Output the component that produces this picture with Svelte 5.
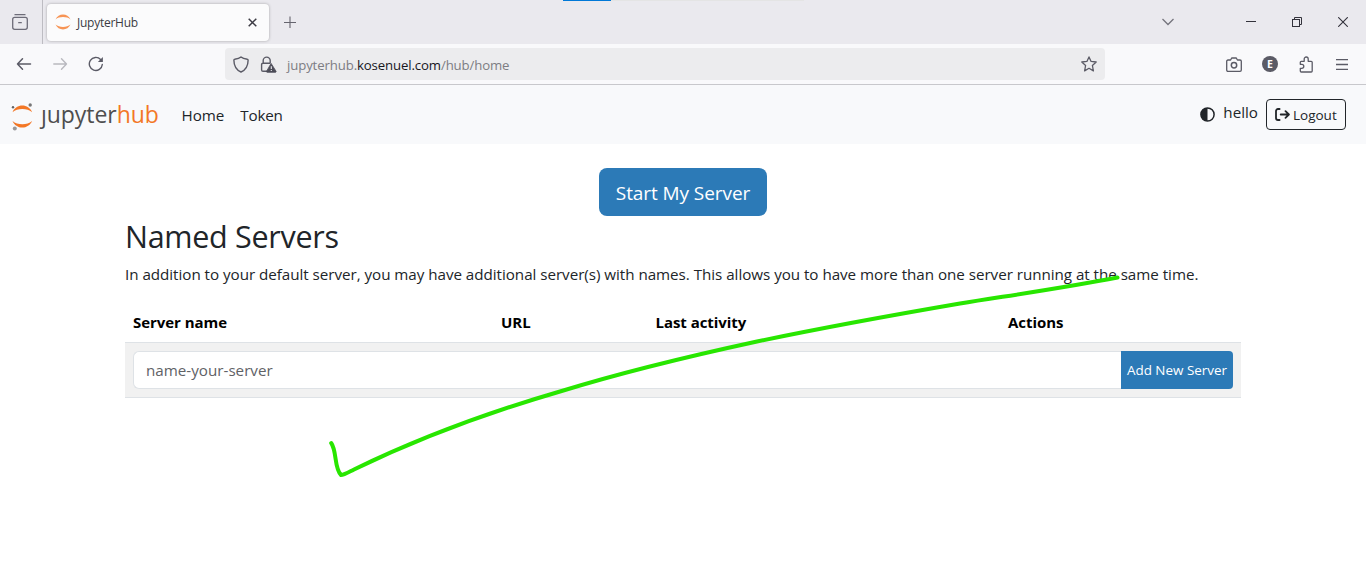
<script>
  const columns = ['Server name', 'URL', 'Last activity', 'Actions'];
</script>

<div class="window">
  <div class="tabs">
    <div class="recent">
      <svg width="18" height="18" viewBox="0 0 18 18" fill="none" stroke="#6d6c78" stroke-width="1.3" stroke-linecap="round">
        <path d="M4 1.7h10" /><rect x="1.7" y="4.4" width="14.6" height="11.9" rx="2" /><path d="M7.7 9.7h2.6" />
      </svg>
    </div>
    <div class="tab">
      <svg width="16" height="16" viewBox="0 0 16 16" fill="#f79455">
        <path d="M.5 5.4C2 2.2 4.8.5 8 .5s6 1.7 7.5 4.9C13.600 3.900 11 3.100 8 3.100S2.400 3.900.5 5.400z" />
        <path d="M.5 10.600C2 13.800 4.800 15.500 8 15.500s6-1.700 7.500-4.900C13.600 12.100 11 12.900 8 12.900s-5.600-.8-7.500-2.300z" />
      </svg>
      <span class="tab-title">JupyterHub</span>
      <svg class="tab-close" width="9" height="9" viewBox="0 0 9 9" stroke="#3c3b44" stroke-width="1.5"><path d="M.7.7l7.600 7.600M8.300.7L.7 8.300" /></svg>
    </div>
    <svg class="plus" width="12" height="12" viewBox="0 0 12 12" stroke="#65646e" stroke-width="1.1"><path d="M0 6.500h12M6 .5v12" /></svg>
    <div class="load"><i></i></div>
    <div class="controls">
      <svg width="12" height="8" viewBox="0 0 12 8" fill="none" stroke="#75747d" stroke-width="1.3"><path d="M.5 1l5.500 5.500L11.500 1" /></svg>
      <svg class="min" width="10" height="10" viewBox="0 0 10 10" stroke="#33323b"><path d="M0 4.500h10" /></svg>
      <svg class="max" width="10" height="10" viewBox="0 0 10 10" fill="none" stroke="#33323b"><rect x=".5" y="2.500" width="7" height="7" /><path d="M2.500 2.500v-2h7v7h-2" /></svg>
      <svg width="10" height="10" viewBox="0 0 10 10" stroke="#33323b" stroke-width="1.1"><path d="M.2.2l9.600 9.600M9.800.2L.2 9.800" /></svg>
    </div>
  </div>

  <div class="toolbar">
    <svg class="back" width="16" height="14" viewBox="0 0 16 14" fill="none" stroke="#5b5b66" stroke-width="1.500" stroke-linecap="round" stroke-linejoin="round"><path d="M6.500 1.800L1.500 7l5 5.200M1.500 7h13" /></svg>
    <svg class="forward" width="16" height="14" viewBox="0 0 16 14" fill="none" stroke="#b9b9bf" stroke-width="1.400" stroke-linecap="round" stroke-linejoin="round"><path d="M8.500 1.800l5 5.200-5 5.200M13.500 7H.8" /></svg>
    <svg class="reload" width="16" height="16" viewBox="0 0 16 16" fill="none" stroke="#5b5b66" stroke-width="1.400" stroke-linecap="round"><path d="M14.300 8.500A6.500 6.500 0 1 1 12.600 3.500" /><path d="M14.900 1v5h-5z" fill="#5b5b66" stroke="none" /></svg>
    <div class="address">
      <svg width="16" height="17" viewBox="0 0 16 17" fill="none" stroke="#5b5b66" stroke-width="1.400" stroke-linejoin="round"><path d="M8 1C6.600 2.300 4.200 3 1.700 3.300c-.6 0-.8.4-.8.9C.9 10 3.600 14 8 16c4.400-2 7.100-6 7.100-11.800 0-.5-.2-.9-.8-.9C11.800 3 9.400 2.300 8 1z" /></svg>
      <svg class="lock" width="17" height="17" viewBox="0 0 17 17" fill="none" stroke="#5b5b66" stroke-width="1.400"><path d="M7 15.300H3A1.400 1.400 0 0 1 1.600 14V8.600A1.400 1.400 0 0 1 3 7.200h7.400M3.200 7V4.600a3.500 3.500 0 0 1 7 0V7" /><path d="M11.100 7.400L6.600 15.200c-.3.600 0 1.100.6 1.100h8.200c.600 0 .9-.5.6-1.100z" fill="#4d4d58" stroke="#4d4d58" stroke-width=".8" stroke-linejoin="round" /><path d="M11.300 10.300v2.700M11.300 13.900v1.200" stroke="#ececef" stroke-width="1.100" /></svg>
      <span class="url">jupyterhub.<b>kosenuel.com</b>/hub/home</span>
      <svg class="star" width="16" height="16" viewBox="0 0 16 16" fill="none" stroke="#5b5b66" stroke-width="1.300" stroke-linejoin="round"><path d="M8 .9l2.100 4.500 5.100.6-3.800 3.500 1 5.400L8 12.300l-4.400 2.600 1-5.400L.8 6l5.100-.6z" /></svg>
    </div>
    <div class="tools">
      <svg width="16" height="15" viewBox="0 0 16 15" fill="none" stroke="#5b5b66" stroke-width="1.300" stroke-linejoin="round"><path d="M2 3h2.600l1.100-2h4.600l1.100 2H14c.8 0 1.300.5 1.300 1.300V13c0 .8-.5 1.300-1.300 1.300H2c-.8 0-1.300-.5-1.300-1.300V4.300C.7 3.500 1.200 3 2 3z" /><circle cx="8" cy="8.300" r="2.700" stroke-width="1.500" /></svg>
      <span class="avatar">E</span>
      <svg width="16" height="17" viewBox="0 0 16 17" fill="none" stroke="#5b5b66" stroke-width="1.300" stroke-linejoin="round"><path d="M3.300 5.300h2.900V3a2 2 0 0 1 4 0v2.300h3c.7 0 1 .4 1 1V15c0 .7-.3 1-1 1H3.300c-.7 0-1-.3-1-1v-2.700h1.500a2 2 0 0 0 0-4H2.300v-2c0-.6.300-1 1-1z" /></svg>
      <svg class="menu" width="12" height="11" viewBox="0 0 12 11" stroke="#5b5b66" stroke-width="1.300"><path d="M0 .5h12M0 5.500h12M0 10.500h12" /></svg>
    </div>
  </div>

  <nav>
    <div class="brand">
      <svg width="23" height="28" viewBox="0 0 23 28">
        <path fill="#f37726" d="M1.500 9.200C3.300 5 7.100 2.600 11.300 2.600S19.300 5 21.100 9.200C18.600 7.100 15 6 11.300 6S4 7.100 1.500 9.200zM1.500 18c1.800 4.200 5.600 6.600 9.800 6.600s8-2.400 9.800-6.600c-2.500 2.100-6.100 3.200-9.800 3.200S4 20.100 1.500 18z" />
        <circle cx="19.200" cy="2" r="1.700" fill="#767677" /><circle cx="2" cy="4.300" r="1.200" fill="#616262" /><circle cx="3.800" cy="25.500" r="2" fill="#989798" />
      </svg>
      <span class="wordmark">ȷupyter<em>hub</em></span>
    </div>
    <span class="home">Home</span>
    <span class="token">Token</span>
    <div class="user">
      <svg class="theme" width="15" height="15" viewBox="0 0 15 15"><circle cx="7.500" cy="7.500" r="6.600" fill="none" stroke="#212529" stroke-width="1.500" /><path d="M7.500.9a6.600 6.600 0 0 0 0 13.200z" fill="#212529" /></svg>
      <span class="hello">hello</span>
      <button class="logout">
        <svg width="15" height="13" viewBox="0 0 15 13" fill="none" stroke="#212529" stroke-width="1.800" stroke-linecap="round" stroke-linejoin="round"><path d="M4.600 1H3a2 2 0 0 0-2 2v7a2 2 0 0 0 2 2h1.600" /><path d="M5.700 6.500h8M10.500 3.200l3.400 3.300-3.400 3.300" /></svg>
        <span>Logout</span>
      </button>
    </div>
  </nav>

  <main>
    <button class="start"><span>Start My Server</span></button>
    <h2>Named Servers</h2>
    <p>In addition to your default server, you may have additional server(s) with names. This allows you to have more than one server running at the same time.</p>
    <div class="head">
      {#each columns as column}<span>{column}</span>{/each}
    </div>
    <div class="new-row">
      <input placeholder="name-your-server" />
      <button class="add"><span>Add New Server</span></button>
    </div>
  </main>

  <svg class="mark" width="1366" height="566" viewBox="0 0 1366 566" fill="none" stroke="#28e600" stroke-width="4" stroke-linecap="round" stroke-linejoin="round">
    <path d="M331.200 443C337 451 334 468 341 475C344 475 349 472 354 469.500C421 437 493 411 560 391.500C625 371.500 690 356 757 341.500C824 327.500 893 315 960 303.500C1013 295 1066 287.500 1117.500 277.500" />
  </svg>
</div>

<style>
  :global(body) { margin: 0; background: #fff; overflow: hidden; }
  * { box-sizing: border-box; }
  svg { display: block; flex: none; }
  button { font: inherit; margin: 0; }
  span, h2, p { white-space: nowrap; }
  .window { position: relative; width: 1366px; height: 566px; overflow: hidden; font: 15.2px "Open Sans", "Noto Sans", sans-serif; color: #212529; }
  .tabs { display: flex; height: 44px; background: #eae9ee; align-items: center; }
  .recent { width: 43px; height: 44px; border-right: 1px solid #bdbcc2; padding: 13px 0 0 11px; }
  .tab { display: flex; align-items: center; width: 222px; height: 37px; margin-left: 4px; padding: 0 12px 0 8px; background: #fbfbfc; border-radius: 4px; box-shadow: 0 0 3px #0000004d; }
  .tab-title { font-size: 12px; color: #3c3b44; margin: 1px 0 0 6px; letter-spacing: -.25px; }
  .tab-close { margin-left: auto; }
  .plus { margin-left: 15px; }
  .load { align-self: flex-start; width: 241px; height: 1px; margin-left: 267px; background: #e4e4e4; }
  .load i { display: block; width: 48px; height: 1px; background: #0078d7; }
  .controls { display: flex; align-items: center; margin-left: auto; padding-right: 18px; }
  .min { margin-left: 72px; }
  .max { margin: 0 36px; }
  .toolbar { display: flex; align-items: center; height: 41px; background: #f9f9fb; border-bottom: 1px solid #c8c8cc; }
  .back { margin-left: 16px; }
  .forward { margin-left: 21px; }
  .reload { margin-left: 19px; }
  .address { display: flex; align-items: center; width: 880px; height: 32px; margin-left: 121px; padding: 0 8px; background: #ececee; border-radius: 4px; }
  .lock { margin-left: 11px; }
  .url { margin-left: 10px; font-size: 13.200px; letter-spacing: -.12px; color: #7d7d83; padding-top: 2px; }
  .url b { font-weight: 400; color: #17161d; }
  .star { margin-left: auto; }
  .tools { display: flex; align-items: center; margin-left: auto; padding-right: 18px; gap: 20px; }
  .avatar { width: 16px; height: 16px; border-radius: 50%; background: #5b5b66; color: #fff; font: 700 10.500px/16px "Open Sans", sans-serif; text-align: center; }
  .menu { margin-left: 2px; }
  nav { display: flex; align-items: center; height: 59px; background: #f8f9fb; padding: 0 20px 0 11px; }
  .brand { display: flex; width: 148px; height: 30px; align-items: center; margin-top: 5px; }
  .wordmark { margin-left: 7px; margin-top: -7px; font-size: 23px; line-height: 30px; color: #4e4e4e; letter-spacing: -.05px; }
  .wordmark em { font-style: normal; color: #f37726; }
  .home { margin: 1px 0 0 22.500px; letter-spacing: -.03px; }
  .token { margin: 1px 0 0 16px; letter-spacing: -.2px; }
  .user { display: flex; align-items: center; margin-left: auto; }
  .theme { margin-top: 0; }
  .hello { margin: -5px 8px 0 8.500px; }
  .logout { display: flex; align-items: center; width: 80px; height: 31px; padding: 0 0 0 8px; gap: 3px; background: transparent; color: #212529; border: 1px solid #212529; border-radius: 4px; font-size: 13.500px; margin-top: 0; }
  main { width: 1116px; margin: 24px 0 0 125px; }
  .start { display: block; width: 168px; height: 48px; margin: 0 auto; padding: 2px 0 0; border: 0; border-radius: 8px; background: #2c7ab7; color: #fff; font-size: 19px; letter-spacing: -.08px; }
  h2 { margin: 1px 0 0; font-size: 30.500px; line-height: 38px; font-weight: 400; letter-spacing: -.3px; }
  p { margin: 7px 0 0; line-height: 24px; letter-spacing: -.036px; }
  .head { display: grid; grid-template-columns: 368px 154.500px 352.500px 1fr; height: 40px; margin-top: 17px; padding: 0 8px 2px; align-items: center; border-bottom: 1px solid #dee2e6; font-weight: 700; color: #000; font-size: 15px; letter-spacing: -.05px; }
  .new-row { display: flex; height: 55px; padding: 8px; background: #f1f1f1; border-bottom: 1px solid #dee2e6; }
  input { width: 988px; height: 38px; margin: 0; padding: 0 12px; border: 1px solid #dee2e6; border-right: 0; border-radius: 6px 0 0 6px; font: inherit; background: #fff; }
  input::placeholder { color: #5f6266; opacity: 1; }
  .add { width: 112px; height: 38px; padding: 0; border: 0; border-radius: 0 4px 4px 0; background: #2c7ab7; color: #fff; font-size: 13.450px; }
  .mark { position: absolute; left: 0; top: 0; pointer-events: none; }
</style>
